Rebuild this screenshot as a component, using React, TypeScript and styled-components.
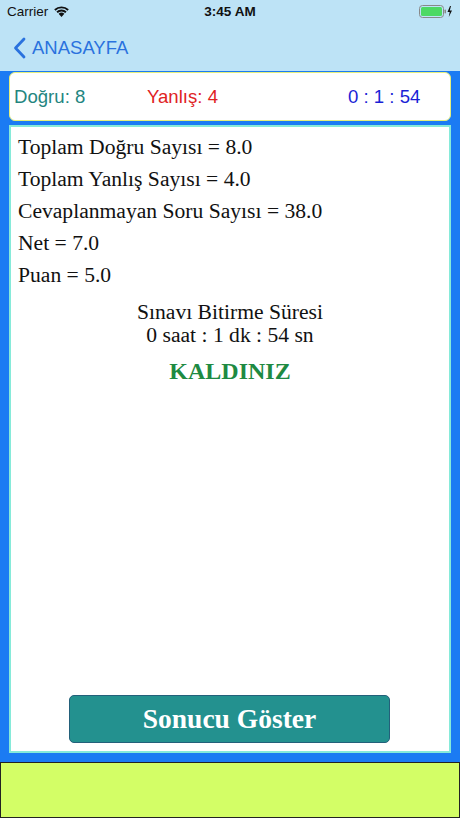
import styled, { createGlobalStyle } from 'styled-components';

const GlobalStyle = createGlobalStyle`
  html, body {
    margin: 0;
    padding: 0;
  }
  body {
    font-family: 'Liberation Sans', Arial, sans-serif;
  }
`;

const COLOR = {
  HEADER: '#bde3f6',
  BLUE: '#1b7bf3',
  LINK: '#2a72de',
  CORRECT: '#23857f',
  WRONG: '#e0221f',
  TIMER: '#1b1fd6',
  PASS: '#1e8a42',
  BUTTON: '#23918f',
  FOOTER: '#d3fe66',
};

const StyledPage = styled.div`
  width: 460px;
  height: 818px;
  display: flex;
  flex-direction: column;
  overflow: hidden;
`;

const StyledHeader = styled.header`
  background: ${COLOR.HEADER};
  height: 71px;
  display: flex;
  flex-direction: column;
`;

const StyledStatusBar = styled.div`
  height: 22px;
  padding: 0 7px;
  display: flex;
  align-items: center;
  justify-content: space-between;
  font-size: 13.5px;
  color: #111;
`;

const StyledCarrier = styled.div`
  display: flex;
  align-items: center;
  gap: 5px;
  width: 120px;
`;

const StyledClock = styled.div`
  font-weight: bold;
  font-size: 13.5px;
`;

const StyledBattery = styled.div`
  width: 120px;
  display: flex;
  justify-content: flex-end;
  align-items: center;
`;

const StyledNavBar = styled.nav`
  flex: 1;
  display: flex;
  align-items: center;
  padding: 2px 0 0 13px;
  gap: 6px;
  color: ${COLOR.LINK};
  font-size: 18.5px;
`;

const StyledContent = styled.main`
  flex: 1;
  background: ${COLOR.BLUE};
  padding: 1px 9px 9px;
  display: flex;
  flex-direction: column;
  gap: 4px;
`;

const StyledScoreCard = styled.div`
  height: 47px;
  background: #fff;
  border: 1.5px solid #e4ee7c;
  border-radius: 6px;
  display: flex;
  align-items: center;
  font-size: 18.6px;
  padding: 0 0 0 4px;
`;

const StyledScore = styled.span<{ color: string; width: number }>`
  color: ${(p) => p.color};
  width: ${(p) => p.width}px;
`;

const StyledResultCard = styled.section`
  flex: 1;
  background: #fff;
  border: 2px solid #86ead9;
  display: flex;
  flex-direction: column;
  font-family: 'Liberation Serif', 'DejaVu Serif', serif;
  color: #111;
`;

const StyledLines = styled.div`
  padding-top: 4px;
`;

const StyledLine = styled.div`
  font-size: 21.6px;
  height: 32px;
  line-height: 32px;
  padding-left: 7px;
`;

const StyledDuration = styled.div`
  margin-top: 10px;
  text-align: center;
  font-size: 21.6px;
  line-height: 23px;
`;

const StyledVerdict = styled.div`
  margin-top: 11px;
  text-align: center;
  font-size: 24px;
  font-weight: bold;
  color: ${COLOR.PASS};
`;

const StyledButtonRow = styled.div`
  margin-top: auto;
  padding: 0 0 8px 58px;
`;

const StyledButton = styled.button`
  width: 321px;
  height: 48px;
  background: ${COLOR.BUTTON};
  border: 1.5px solid #23607a;
  border-radius: 5px;
  color: #fff;
  font-family: 'Liberation Serif', 'DejaVu Serif', serif;
  font-weight: bold;
  font-size: 27.5px;
  padding: 0;
`;

const StyledFooter = styled.footer`
  height: 56px;
  box-sizing: border-box;
  background: ${COLOR.FOOTER};
  border: 1px solid #222;
`;

const Wifi = () => (
  <svg width="17" height="12" viewBox="0 0 17 12">
    <path d="M8.5 12 L5.6 8.8 A4.2 4.2 0 0 1 11.4 8.8 Z" fill="#111" />
    <path d="M3.4 6.6 A7.4 7.4 0 0 1 13.6 6.6 L12.3 8 A5.5 5.5 0 0 0 4.7 8 Z" fill="#111" />
    <path d="M1.2 4.3 A10.6 10.6 0 0 1 15.8 4.3 L14.5 5.7 A8.6 8.6 0 0 0 2.5 5.7 Z" fill="#111" />
  </svg>
);

const Battery = () => (
  <svg width="34" height="13" viewBox="0 0 34 13">
    <rect x="0.5" y="0.5" width="24" height="12" rx="3" fill="none" stroke="#888" />
    <rect x="2" y="2" width="21" height="9" rx="1.5" fill="#4cd964" />
    <rect x="25.5" y="4.5" width="1.5" height="4" rx="0.7" fill="#888" />
    <path d="M31 1 L28.5 7 H30.7 L29.8 12 L33 5.6 H30.8 L32 1 Z" fill="#111" />
  </svg>
);

const Chevron = () => (
  <svg width="13" height="22" viewBox="0 0 13 22">
    <path d="M11 2 L2.5 11 L11 20" fill="none" stroke={COLOR.LINK} strokeWidth="2.8" strokeLinecap="round" strokeLinejoin="round" />
  </svg>
);

const results = [
  'Toplam Doğru Sayısı = 8.0',
  'Toplam Yanlış Sayısı = 4.0',
  'Cevaplanmayan Soru Sayısı = 38.0',
  'Net = 7.0',
  'Puan = 5.0',
];

const App = () => {
  return (
    <>
      <GlobalStyle />
      <StyledPage>
        <StyledHeader>
          <StyledStatusBar>
            <StyledCarrier>
              Carrier <Wifi />
            </StyledCarrier>
            <StyledClock>3:45 AM</StyledClock>
            <StyledBattery>
              <Battery />
            </StyledBattery>
          </StyledStatusBar>
          <StyledNavBar>
            <Chevron />
            ANASAYFA
          </StyledNavBar>
        </StyledHeader>
        <StyledContent>
          <StyledScoreCard>
            <StyledScore color={COLOR.CORRECT} width={133}>Doğru: 8</StyledScore>
            <StyledScore color={COLOR.WRONG} width={201}>Yanlış: 4</StyledScore>
            <StyledScore color={COLOR.TIMER} width={90}>0 : 1 : 54</StyledScore>
          </StyledScoreCard>
          <StyledResultCard>
            <StyledLines>
              {results.map((line) => (
                <StyledLine key={line}>{line}</StyledLine>
              ))}
            </StyledLines>
            <StyledDuration>
              Sınavı Bitirme Süresi
              <br />0 saat : 1 dk : 54 sn
            </StyledDuration>
            <StyledVerdict>KALDINIZ</StyledVerdict>
            <StyledButtonRow>
              <StyledButton>Sonucu Göster</StyledButton>
            </StyledButtonRow>
          </StyledResultCard>
        </StyledContent>
        <StyledFooter />
      </StyledPage>
    </>
  );
};

export default App;
